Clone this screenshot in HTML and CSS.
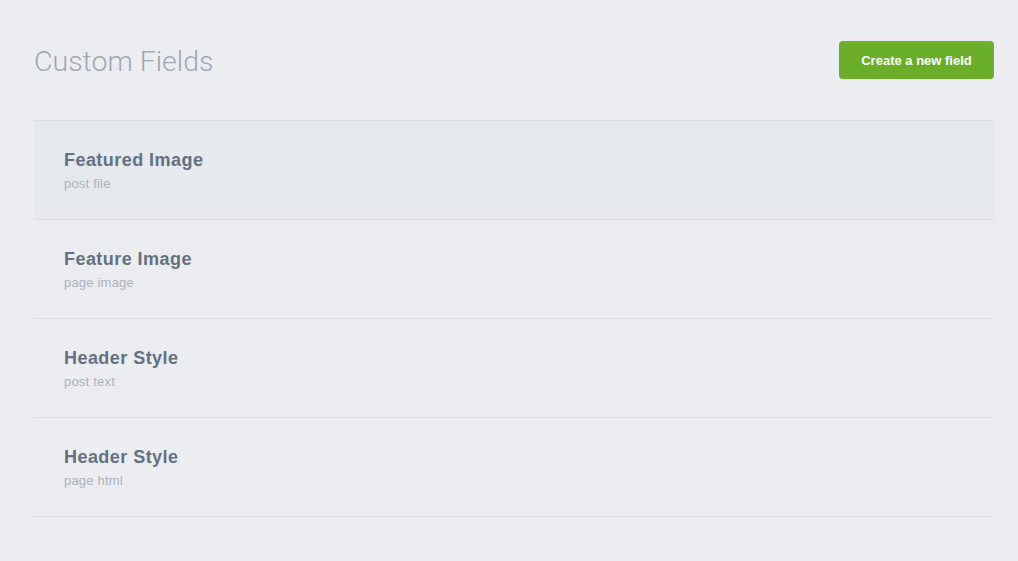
FILE: index.html
```html
<!DOCTYPE html>
<html>
<head>
<meta charset="utf-8">
<link rel="stylesheet" href="styles.css">
</head>
<body>
<div class="page">
  <header class="header">
    <h1 class="title">Custom Fields</h1>
    <button class="btn">Create a new field</button>
  </header>
  <ul class="list">
    <li class="row active"><div class="name">Featured Image</div><div class="meta">post file</div></li>
    <li class="row"><div class="name">Feature Image</div><div class="meta">page image</div></li>
    <li class="row"><div class="name">Header Style</div><div class="meta">post text</div></li>
    <li class="row"><div class="name">Header Style</div><div class="meta">page html</div></li>
  </ul>
</div>
</body>
</html>
```
FILE: styles.css
```css
html, body {
  margin: 0;
  padding: 0;
  background: #ecedf1;
  font-family: "Liberation Sans", Arial, sans-serif;
}
.page {
  padding: 41px 24px 0 34px;
}
.header {
  display: flex;
  justify-content: space-between;
  align-items: flex-start;
  height: 79px;
}
.title {
  margin: 0;
  padding-top: 3px;
  font-family: Roboto, "Liberation Sans", sans-serif;
  font-weight: 300;
  font-size: 28.5px;
  line-height: 36px;
  color: #9da6b3;
}
.btn {
  width: 155px;
  height: 38px;
  border: none;
  border-radius: 4px;
  background: #6aae2a;
  color: #fff;
  font-family: "Liberation Sans", Arial, sans-serif;
  font-weight: bold;
  font-size: 13px;
  padding: 0;
}
.list {
  list-style: none;
  margin: 0;
  padding: 0;
  border-top: 1px solid #dcdfe4;
}
.row {
  height: 98px;
  border-bottom: 1px solid #dcdfe4;
  padding: 0 30px;
  box-sizing: content-box;
}
.row.active {
  background: #e6e9ee;
}
.name {
  padding-top: 28px;
  font-size: 18px;
  line-height: 22px;
  font-weight: bold;
  letter-spacing: 0.45px;
  color: #627081;
}
.meta {
  margin-top: 5px;
  font-size: 13px;
  line-height: 16px;
  letter-spacing: 0.2px;
  color: #a9b0bb;
}
```
